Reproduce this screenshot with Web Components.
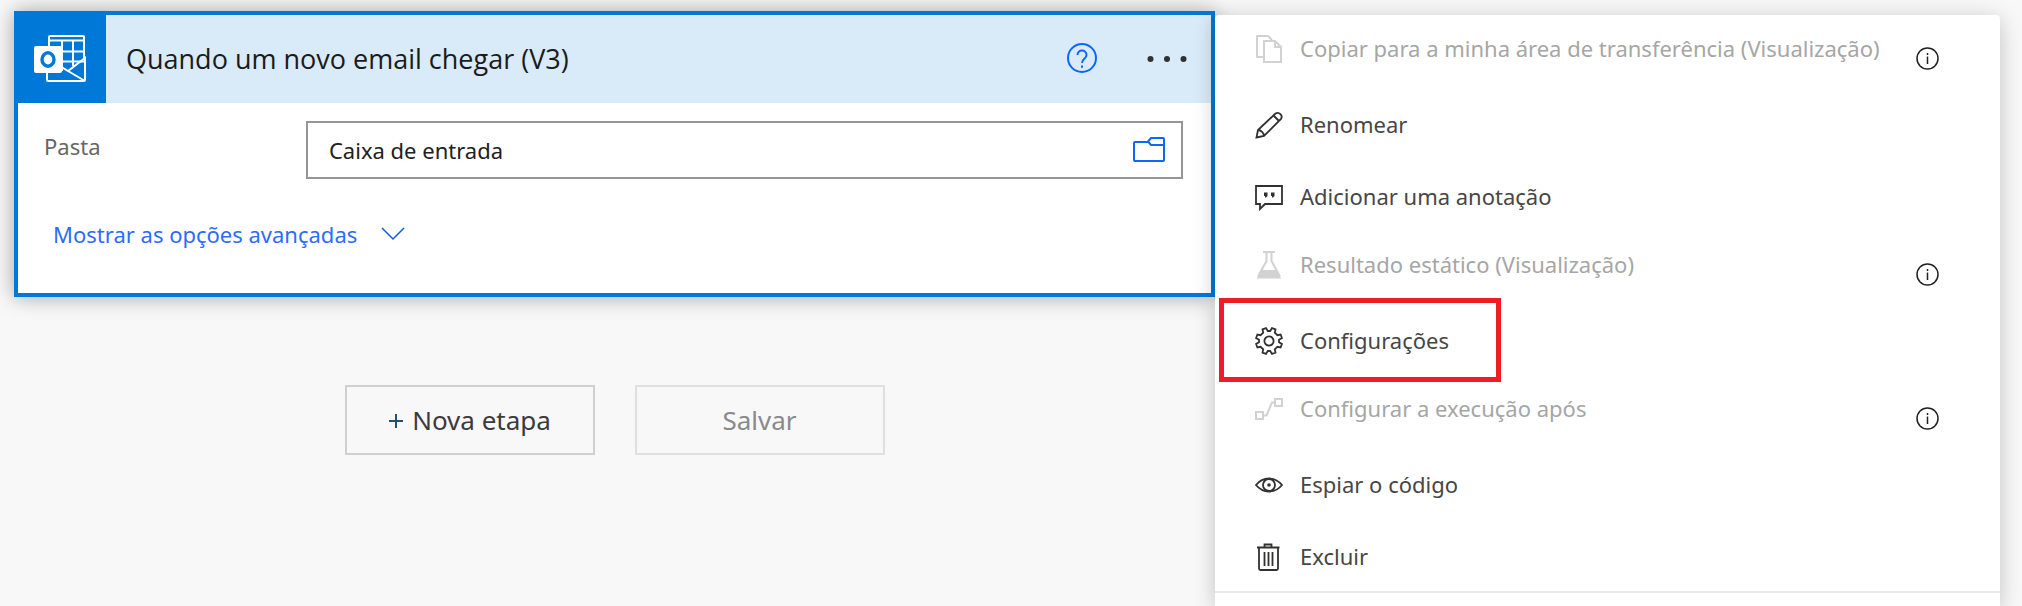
<!DOCTYPE html>
<html lang="pt-BR">
<head>
<meta charset="utf-8">
<meta name="viewport" content="width=device-width, initial-scale=1">
<title>Quando um novo email chegar (V3)</title>
<style>
  body { margin: 0; background: #f8f8f8; font-family: "Noto Sans", "Open Sans", sans-serif; color: #323130; }
</style>
</head>
<body>
<flow-designer>
  <trigger-card slot="steps" heading="Quando um novo email chegar (V3)">
    <folder-field label="Pasta" value="Caixa de entrada"></folder-field>
    <advanced-toggle>Mostrar as opções avançadas</advanced-toggle>
  </trigger-card>
  <flow-button slot="actions" plus>Nova etapa</flow-button>
  <flow-button slot="actions" disabled>Salvar</flow-button>
  <context-menu slot="menu">
    <menu-entry icon="copy" disabled>Copiar para a minha área de transferência (Visualização)</menu-entry>
    <menu-entry icon="pencil">Renomear</menu-entry>
    <menu-entry icon="comment">Adicionar uma anotação</menu-entry>
    <menu-entry icon="flask" disabled>Resultado estático (Visualização)</menu-entry>
    <menu-entry icon="gear" highlighted>Configurações</menu-entry>
    <menu-entry icon="branch" disabled>Configurar a execução após</menu-entry>
    <menu-entry icon="eye">Espiar o código</menu-entry>
    <menu-entry icon="trash">Excluir</menu-entry>
  </context-menu>
</flow-designer>

<script>
const ICONS = {
  copy: '<path d="M9 22H2V1h11l4 4"/><path d="M9 6h11l6 6v15H9z"/><path d="M20 6v6h6"/>',
  pencil: '<path d="M1.500 26.500 3 19 20.500 2.500a4 4 0 0 1 5.500 5.500L9 25z"/><path d="M3 19c3 0 6 3 6 6M18.500 4.500l5.500 5.500"/>',
  comment: '<path d="M1 3h26v18H10l-5 5v-5H1z"/><path fill="currentColor" stroke="none" d="M9 9.500h3.500v3.500l-1.500 1.500h-1v-1.500H9zM16 9.500h3.500v3.500l-1.500 1.500h-1v-1.500h-1z"/>',
  flask: '<path d="M8 1h12M11.500 1v9L3 25.500M16.500 1v9L25 25.500"/><path fill="currentColor" d="M7.500 20h13l4 6.500h-21z"/>',
  gear: '<g transform="translate(14 14)"><path d="M12.900 3 11.600 6.500 8.400 5.800 7.800 6.400 5.800 8.400 6.500 11.600 3 12.900 1.200 10H-1.200L-3 12.900-6.500 11.600-5.800 8.400-8.400 5.800-11.600 6.500-12.900 3-10 1.200V-1.200L-12.900-3-11.600-6.500-8.400-5.800-5.800-8.400-6.500-11.600-3-12.900-1.200-10H1.200L3-12.900 6.500-11.600 5.800-8.400 8.400-5.800 11.600-6.500 12.900-3 10-1.200V1.200z"/><circle r="4.600"/></g>',
  branch: '<path d="M1 17h7v7H1zM20 4h7v7h-7zM9 20.500h2.500L17 7.500h2.500"/>',
  eye: '<path d="M1 14C5 9 9 7.500 14 7.500S23 9 27 14c-4 5-8 6.500-13 6.500S5 19 1 14z"/><circle cx="14" cy="14" r="6"/><circle cx="14" cy="14" r="1.800" fill="currentColor" stroke="none"/>',
  trash: '<path d="M2 4.500h22.500M9.500 4V1.500h7V4M4 5v20.500a1.500 1.500 0 0 0 1.500 1.500h16a1.500 1.500 0 0 0 1.500-1.500V5M9.500 9v14M13.500 9v14M17.500 9v14"/>'
};

function define(name, render) {
  customElements.define(name, class extends HTMLElement {
    constructor() {
      super();
      this.attachShadow({ mode: 'open' });
    }
    connectedCallback() {
      this.shadowRoot.innerHTML = render(this);
    }
  });
}

define('flow-designer', () => `
  <style>
    :host { display: grid; grid-template-columns: minmax(0, 1201fr) minmax(0, 785fr); min-height: 100vh; box-sizing: border-box; padding: 0 22px 0 14px; overflow: hidden; }
    main { padding-top: 11px; }
    .actions { display: flex; justify-content: center; gap: 40px; margin-top: 88px; }
    aside { display: flex; flex-direction: column; padding-top: 15px; position: relative; }
  </style>
  <main><slot name="steps"></slot><div class="actions"><slot name="actions"></slot></div></main>
  <aside><slot name="menu"></slot></aside>`);

define('trigger-card', el => `
  <style>
    :host { display: block; border: 4px solid #0078d7; background: #fff; box-shadow: 0 0 20px rgba(0, 0, 0, .35); }
    header { display: flex; align-items: center; height: 88px; background: #d9eaf8; }
    .tile { display: flex; align-items: center; justify-content: center; width: 88px; height: 88px; box-sizing: border-box; padding-right: 4px; background: #0078d7; margin-right: 20px; }
    h2 { flex: 1; margin: 0; font-family: "Open Sans", "Noto Sans", sans-serif; font-size: 27px; line-height: 36px; font-weight: 400; color: #1b1b1b; }
    button { display: flex; padding: 0 0 2px; border: 0; background: none; }
    .help { margin-right: 50px; }
    .more { margin-right: 24px; }
    .body { padding: 18px 28px 34px 26px; }
  </style>
  <header>
    <span class="tile">
      <svg width="56" height="50" viewBox="0 0 56 50" fill="none" stroke="#fff" stroke-width="2">
        <path d="M17 12V3q0-1 1-1h33q1 0 1 1v23M17 6.500h35M30 7v30M41 7v25M28 17.500h24M28 27.500h24" />
        <path d="M15 38v8q0 1 1 1h36q1 0 1-1V24L36 37 28 32M36 37 53 47" />
        <path fill="#fff" stroke="none" d="M4 12h24q2 0 2 2v23q0 2-2 2H4q-2 0-2-2V14q0-2 2-2z" />
        <ellipse cx="16" cy="25.500" rx="6" ry="6.700" stroke="#0078d7" stroke-width="3.400" />
      </svg>
    </span>
    <h2>${el.getAttribute('heading')}</h2>
    <button class="help" aria-label="Ajuda">
      <svg width="30" height="30" viewBox="0 0 30 30" fill="none" stroke="#0a66ff" stroke-width="2">
        <circle cx="15" cy="15" r="14" /><path d="M10.500 12c0-6 9-6 9 0 0 4-4.500 3.500-4.500 8M15 22.500v2.200" />
      </svg>
    </button>
    <button class="more" aria-label="Mais opções">
      <svg width="40" height="8" viewBox="0 0 40 8" fill="#323130"><circle cx="3.500" cy="5" r="3" /><circle cx="20" cy="5" r="3" /><circle cx="36.500" cy="5" r="3" /></svg>
    </button>
  </header>
  <div class="body"><slot></slot></div>`);

define('folder-field', el => `
  <style>
    :host { display: grid; grid-template-columns: 23% minmax(0, 1fr); }
    label { font-size: 22px; line-height: 50px; color: #666; }
    .box { display: flex; align-items: center; height: 58px; box-sizing: border-box; border: 2px solid #969696; padding: 0 16px 0 21px; background: #fff; }
    input { flex: 1; min-width: 0; border: 0; padding: 0; outline: 0; background: none; font: inherit; font-size: 22px; line-height: 32px; color: #212121; }
    button { display: flex; padding: 0; border: 0; background: none; }
  </style>
  <label for="folder">${el.getAttribute('label')}</label>
  <div class="box">
    <input id="folder" type="text" value="${el.getAttribute('value')}">
    <button aria-label="Escolher pasta">
      <svg width="32" height="26" viewBox="0 0 32 26" fill="none" stroke="#0a66ff" stroke-width="2">
        <path d="M31 8V2q0-1-1-1H18l-3 3.500L18 8h13v15q0 1-1 1H2q-1 0-1-1V6q0-1 1-1h13" />
      </svg>
    </button>
  </div>`);

define('advanced-toggle', () => `
  <style>
    :host { display: block; margin-top: 30px; padding-left: 9px; }
    button { display: flex; align-items: center; gap: 24px; height: 50px; padding: 0; border: 0; background: none; font: inherit; font-size: 22px; line-height: 32px; color: #2e6bff; }
  </style>
  <button aria-expanded="false"><slot></slot>
    <svg width="24" height="14" viewBox="0 0 24 14" fill="none" stroke="#0a58ff" stroke-width="1.500"><path d="M1 1l11 11L23 1" /></svg>
  </button>`);

define('flow-button', el => `
  <style>
    :host { display: block; }
    button { display: flex; align-items: center; justify-content: center; gap: 8px; width: 250px; height: 70px; border: 2px solid #d0d0d0; background: #f8f8f8; font: inherit; font-size: 26px; line-height: 36px; color: #3b3b3b; }
    button:disabled { border-color: #e0e0e0; color: #8a8a8a; }
  </style>
  <button ${el.hasAttribute('disabled') ? 'disabled' : ''}>
    ${el.hasAttribute('plus') ? '<svg width="16" height="16" viewBox="0 0 16 16" stroke="#24506f" stroke-width="2" aria-hidden="true"><path d="M1 9h14M8 2v14"/></svg>' : ''}<span><slot></slot></span>
  </button>`);

define('context-menu', () => `
  <style>
    :host { display: flex; flex-direction: column; flex: 1; background: #fff; border-radius: 4px 4px 0 0; padding-top: 2px; box-shadow: 0 4px 22px rgba(0, 0, 0, .22); }
    .rows { border-bottom: 2px solid #e8e8e8; height: 574px; }
  </style>
  <div class="rows" role="menu"><slot></slot></div>`);

define('menu-entry', el => {
  const off = el.hasAttribute('disabled');
  return `
  <style>
    :host { display: flex; position: relative; height: 72px; }
    .item { display: flex; align-items: center; gap: 17px; flex: 1; min-width: 0; padding: 0 0 0 40px; border: 0; background: none; font: inherit; font-size: 22px; line-height: 32px; color: #484644; text-align: left; white-space: nowrap; }
    .item:disabled { padding-bottom: 8px; color: #a6a6a6; }
    .item span { padding-bottom: 2px; }
    .item svg { flex: none; color: #323130; }
    .item:disabled svg { color: #d2d2d2; }
    .info { display: flex; align-items: center; padding: 10px 61px 0 0; border: 0; background: none; }
    .mark { position: absolute; inset: -7px auto -5px 4px; width: 282px; box-sizing: border-box; border: 5px solid #ee1c25; pointer-events: none; }
  </style>
  <button class="item" role="menuitem" ${off ? 'disabled' : ''}>
    <svg width="28" height="28" viewBox="0 0 28 28" fill="none" stroke="currentColor" stroke-width="${off ? 2 : 1.8}">${ICONS[el.getAttribute('icon')]}</svg>
    <span><slot></slot></span>
  </button>
  ${off ? '<button class="info" aria-label="Informações"><svg width="23" height="23" viewBox="0 0 23 23" fill="none" stroke="#222" stroke-width="1.500"><circle cx="11.500" cy="11.500" r="10.500"/><path d="M11.500 9.500v7.500M11.500 6v2"/></svg></button>' : ''}
  ${el.hasAttribute('highlighted') ? '<span class="mark"></span>' : ''}`;
});
</script>
</body>
</html>
